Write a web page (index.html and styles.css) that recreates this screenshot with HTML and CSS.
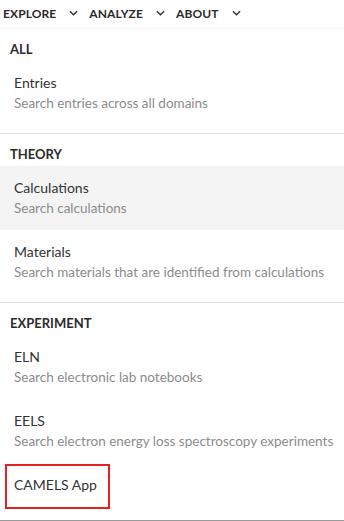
FILE: index.html
```html
<!DOCTYPE html>
<html lang="en">
<head>
  <meta charset="UTF-8">
  <meta name="viewport" content="width=device-width, initial-scale=1">
  <title>Explore menu</title>
  <link rel="stylesheet" href="styles.css">
</head>
<body>
  <nav class="nav">
    <div class="nav-item">Explore
      <svg class="chevron" viewBox="0 0 10 6"><path d="M1 1l4 4 4-4"/></svg>
    </div>
    <div class="nav-item">Analyze
      <svg class="chevron" viewBox="0 0 10 6"><path d="M1 1l4 4 4-4"/></svg>
    </div>
    <div class="nav-item">About
      <svg class="chevron" viewBox="0 0 10 6"><path d="M1 1l4 4 4-4"/></svg>
    </div>
  </nav>

  <div class="menu">
    <div class="section">
      <div class="section-title">All</div>
      <div class="item">
        <div class="item-title">Entries</div>
        <div class="item-desc">Search entries across all domains</div>
      </div>
    </div>

    <div class="section">
      <div class="section-title">Theory</div>
      <div class="item active">
        <div class="item-title">Calculations</div>
        <div class="item-desc">Search calculations</div>
      </div>
      <div class="item">
        <div class="item-title">Materials</div>
        <div class="item-desc">Search materials that are identified from calculations</div>
      </div>
    </div>

    <div class="section">
      <div class="section-title">Experiment</div>
      <div class="item">
        <div class="item-title">ELN</div>
        <div class="item-desc">Search electronic lab notebooks</div>
      </div>
      <div class="item">
        <div class="item-title">EELS</div>
        <div class="item-desc">Search electron energy loss spectroscopy experiments</div>
      </div>
      <div class="item marked">
        <div class="item-title">CAMELS App</div>
      </div>
    </div>
  </div>
</body>
</html>
```

FILE: styles.css
```css
* {
  box-sizing: border-box;
  margin: 0;
  padding: 0;
}

body {
  font-family: Lato, "Open Sans", sans-serif;
  background: #ffffff;
  color: #333333;
  width: 344px;
  height: 521px;
  overflow: hidden;
}

/* top navigation */
.nav {
  height: 29px;
  display: flex;
  align-items: center;
  padding: 0 0 2px 3px;
  border-bottom: 1px solid #f3f3f3;
}

.nav-item {
  display: flex;
  align-items: center;
  font-size: 12px;
  font-weight: 700;
  letter-spacing: 0.1px;
  text-transform: uppercase;
  color: #2b2b2b;
  margin-right: 11px;
}

.chevron {
  width: 9px;
  height: 6px;
  margin-left: 13px;
  fill: none;
  stroke: #333333;
  stroke-width: 1.6;
}

/* dropdown menu */
.menu {
  height: 492px;
  overflow: hidden;
  border-bottom: 1px solid #9a9a9a;
}

.section {
  padding: 8px 0;
  border-bottom: 1px solid #e0e0e0;
}

.section-title {
  height: 24px;
  line-height: 24px;
  padding-left: 10px;
  font-size: 13px;
  font-weight: 700;
  text-transform: uppercase;
  color: #2b2b2b;
}

.item {
  position: relative;
  height: 64px;
  padding: 0 14px;
  display: flex;
  flex-direction: column;
  justify-content: center;
  white-space: nowrap;
}

.item.active {
  background-color: #f4f4f4;
}

.item-title {
  font-size: 14px;
  line-height: 20px;
  color: #333333;
}

.item-desc {
  font-size: 13.5px;
  line-height: 20px;
  color: #8c8c8c;
}

.item.marked {
  justify-content: flex-start;
  padding-top: 12px;
}

/* red annotation box */
.item.marked::after {
  content: '';
  position: absolute;
  left: 5px;
  top: 1px;
  width: 101px;
  height: 41px;
  border: 2px solid #e32222;
}
```
